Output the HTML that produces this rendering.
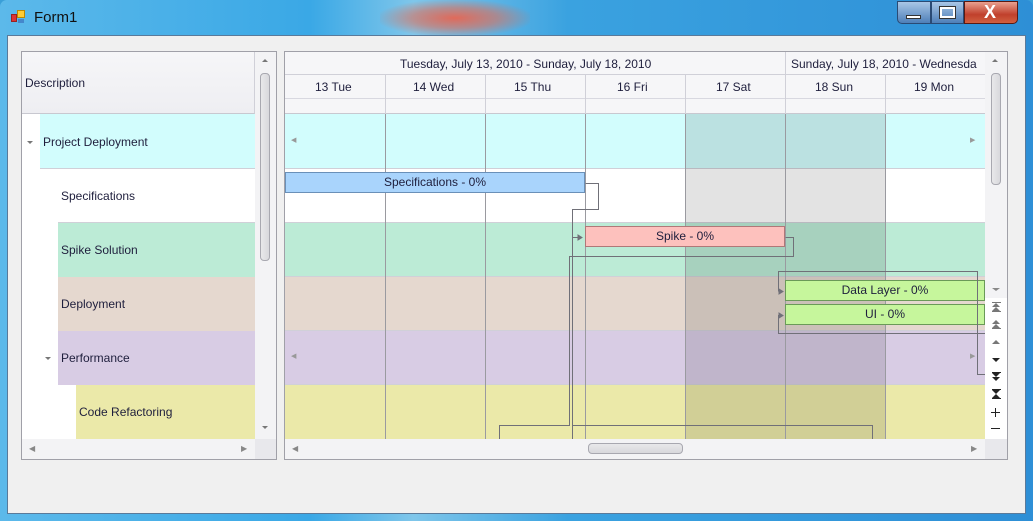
<!DOCTYPE html>
<html><head><style>
*{margin:0;padding:0;box-sizing:border-box}
body{width:1033px;height:521px;overflow:hidden;position:relative;background:#3a9fd8;font-family:"Liberation Sans",sans-serif;font-size:12px;color:#1e1e3c}
.a{position:absolute}
.t{white-space:nowrap}
.u{position:absolute;width:0;height:0;border-left:4px solid transparent;border-right:4px solid transparent;border-bottom:4px solid #777}
.d{position:absolute;width:0;height:0;border-left:4px solid transparent;border-right:4px solid transparent;border-top:4px solid #222}
.b{position:absolute;width:9px;height:1px;background:#777}
</style></head><body>
<div class="a" style="left:0;top:0;width:1033px;height:521px;background:linear-gradient(90deg,#5cb9ea 0%,#3aa8e6 30%,#7fc6ea 40%,#3aa2e0 55%,#2e8fd6 100%);border-radius:7px 7px 0 0"></div>
<div class="a" style="left:380px;top:0;width:150px;height:36px;background:radial-gradient(ellipse at center,#e06a5a 0%,rgba(220,110,90,0.6) 40%,rgba(0,0,0,0) 75%)"></div>
<div class="a" style="left:11px;top:14px;width:6px;height:8px;background:#d33;border:1px solid #922"></div>
<div class="a" style="left:17px;top:10px;width:8px;height:8px;background:#fc3;border:1px solid #b80"></div>
<div class="a" style="left:18px;top:19px;width:6px;height:4px;background:#48c"></div>
<div class="a t" style="left:34px;top:9px;font-size:15px;color:#111">Form1</div>
<div class="a" style="left:897px;top:1px;width:34px;height:23px;border:1px solid #2a4a74;border-radius:0 0 0 5px;background:linear-gradient(#a9c6e6,#4e7fb8)"></div>
<div class="a" style="left:906px;top:15px;width:15px;height:4px;background:#fff;border:1px solid #333"></div>
<div class="a" style="left:931px;top:1px;width:33px;height:23px;border:1px solid #2a4a74;background:linear-gradient(#a9c6e6,#4e7fb8)"></div>
<div class="a" style="left:940px;top:7px;width:15px;height:11px;border:2px solid #fff;outline:1px solid #333"></div>
<div class="a" style="left:964px;top:1px;width:54px;height:23px;border:1px solid #5a1a12;border-radius:0 0 5px 0;background:linear-gradient(#e8a090,#c0402c 60%,#d06040)"></div>
<div class="a t" style="left:984px;top:2px;font-size:18px;font-weight:bold;color:#fff">X</div>
<div class="a" style="left:7px;top:35px;width:1019px;height:479px;background:#f0f0f0;border:1px solid #5a7a9a"></div>

<!-- LEFT PANEL -->
<div class="a" style="left:21px;top:51px;width:256px;height:409px;border:1px solid #a0a0a8;background:#fff;overflow:hidden">
 <div class="a" style="left:0;top:0;width:233px;height:62px;background:linear-gradient(#f6f6f8,#eeeef2);border-bottom:1px solid #c8c8d0;border-right:1px solid #d0d0d8"></div>
 <div class="a t" style="left:3px;top:24px">Description</div>
 <div class="a" style="left:18px;top:62px;width:215px;height:55px;background:#d2fdfd;border-bottom:1px solid #d0d0d8"></div>
 <div class="a t" style="left:21px;top:83px">Project Deployment</div>
 <div class="d" style="left:5px;top:89px;border-top-color:#777;border-left-width:3px;border-right-width:3px;border-top-width:3px"></div>
 <div class="a" style="left:36px;top:117px;width:197px;height:54px;background:#fff;border-bottom:1px solid #d0d0d8"></div>
 <div class="a t" style="left:39px;top:137px">Specifications</div>
 <div class="a" style="left:36px;top:171px;width:197px;height:54px;background:#bcebd6"></div>
 <div class="a t" style="left:39px;top:191px">Spike Solution</div>
 <div class="a" style="left:36px;top:225px;width:197px;height:54px;background:#e5d8cf"></div>
 <div class="a t" style="left:39px;top:245px">Deployment</div>
 <div class="a" style="left:36px;top:279px;width:197px;height:54px;background:#d8cce4"></div>
 <div class="a t" style="left:39px;top:299px">Performance</div>
 <div class="d" style="left:23px;top:305px;border-top-color:#777;border-left-width:3px;border-right-width:3px;border-top-width:3px"></div>
 <div class="a" style="left:54px;top:333px;width:179px;height:54px;background:#ebe9a9"></div>
 <div class="a t" style="left:57px;top:353px">Code Refactoring</div>
 <div class="a" style="left:233px;top:0;width:22px;height:387px;background:#f3f3f5"></div>
 <div class="u" style="left:240px;top:7px;border-bottom-width:3px;border-left-width:3px;border-right-width:3px"></div>
 <div class="a" style="left:238px;top:21px;width:10px;height:188px;border:1px solid #a8a8b0;border-radius:4px;background:linear-gradient(90deg,#e8e8ea,#d8d8dc)"></div>
 <div class="d" style="left:240px;top:374px;border-top-color:#777;border-left-width:3px;border-right-width:3px;border-top-width:3px"></div>
 <div class="a" style="left:0;top:387px;width:255px;height:21px;background:#f3f3f5"></div>
 <div class="a" style="left:233px;top:387px;width:22px;height:21px;background:#e8e8ec"></div>
 <div class="a t" style="left:7px;top:392px;font-size:8px;color:#888">◀</div>
 <div class="a t" style="left:219px;top:392px;font-size:8px;color:#888">▶</div>
</div>

<!-- RIGHT PANEL -->
<div class="a" style="left:284px;top:51px;width:724px;height:409px;border:1px solid #a0a0a8;background:#fff;overflow:hidden">
 <div class="a" style="left:0;top:0;width:700px;height:62px;background:#f6f6f8;border-bottom:1px solid #c8c8d0"></div>
 <div class="a" style="left:0;top:22px;width:700px;height:1px;background:#d0d0d8"></div>
 <div class="a" style="left:0;top:46px;width:700px;height:1px;background:#d8d8e0"></div>
 <div class="a" style="left:500px;top:0;width:1px;height:22px;background:#d0d0d8"></div>
 <div class="a t" style="left:115px;top:5px">Tuesday, July 13, 2010 - Sunday, July 18, 2010</div>
 <div class="a t" style="left:506px;top:5px">Sunday, July 18, 2010 - Wednesda</div>
 <div class="a t" style="left:30px;top:28px">13 Tue</div>
 <div class="a t" style="left:128px;top:28px">14 Wed</div>
 <div class="a t" style="left:229px;top:28px">15 Thu</div>
 <div class="a t" style="left:332px;top:28px">16 Fri</div>
 <div class="a t" style="left:431px;top:28px">17 Sat</div>
 <div class="a t" style="left:530px;top:28px">18 Sun</div>
 <div class="a t" style="left:629px;top:28px">19 Mon</div>
 <div class="a" style="left:0;top:62px;width:700px;height:55px;background:#d2fdfd;border-bottom:1px solid #d0d0d8"></div>
 <div class="a" style="left:0;top:117px;width:700px;height:54px;background:#fff;border-bottom:1px solid #d0d0d8"></div>
 <div class="a" style="left:0;top:171px;width:700px;height:54px;background:#bcebd6;border-bottom:1px solid #d0d0d8"></div>
 <div class="a" style="left:0;top:225px;width:700px;height:54px;background:#e5d8cf;border-bottom:1px solid #d0d0d8"></div>
 <div class="a" style="left:0;top:279px;width:700px;height:54px;background:#d8cce4;border-bottom:1px solid #d0d0d8"></div>
 <div class="a" style="left:0;top:333px;width:700px;height:54px;background:#ebe9a9"></div>
 <div class="a" style="left:400px;top:62px;width:200px;height:325px;background:rgba(0,0,0,0.11)"></div>
 <div class="a" style="left:100px;top:22px;width:1px;height:40px;background:#d0d0d8"></div>
 <div class="a" style="left:200px;top:22px;width:1px;height:40px;background:#d0d0d8"></div>
 <div class="a" style="left:300px;top:22px;width:1px;height:40px;background:#d0d0d8"></div>
 <div class="a" style="left:400px;top:22px;width:1px;height:40px;background:#d0d0d8"></div>
 <div class="a" style="left:500px;top:22px;width:1px;height:40px;background:#d0d0d8"></div>
 <div class="a" style="left:600px;top:22px;width:1px;height:40px;background:#d0d0d8"></div>
 <div class="a" style="left:100px;top:62px;width:1px;height:325px;background:#9a9aa0"></div>
 <div class="a" style="left:200px;top:62px;width:1px;height:325px;background:#9a9aa0"></div>
 <div class="a" style="left:300px;top:62px;width:1px;height:325px;background:#9a9aa0"></div>
 <div class="a" style="left:400px;top:62px;width:1px;height:325px;background:#9a9aa0"></div>
 <div class="a" style="left:500px;top:62px;width:1px;height:325px;background:#9a9aa0"></div>
 <div class="a" style="left:600px;top:62px;width:1px;height:325px;background:#9a9aa0"></div>
 <div class="a t" style="left:6px;top:84px;font-size:7px;color:#999">◀</div>
 <div class="a t" style="left:685px;top:84px;font-size:7px;color:#999">▶</div>
 <div class="a t" style="left:6px;top:300px;font-size:7px;color:#999">◀</div>
 <div class="a t" style="left:685px;top:300px;font-size:7px;color:#999">▶</div>
 <div class="a t" style="left:0;top:120px;width:300px;height:21px;background:#a9d4fc;border:1px solid #6a90b8;text-align:center;line-height:19px">Specifications - 0%</div>
 <div class="a t" style="left:300px;top:174px;width:200px;height:21px;background:#fdc1bd;border:1px solid #b07878;text-align:center;line-height:19px">Spike - 0%</div>
 <div class="a t" style="left:500px;top:228px;width:200px;height:21px;background:#c6f69c;border:1px solid #6a9a58;text-align:center;line-height:19px">Data Layer - 0%</div>
 <div class="a t" style="left:500px;top:252px;width:200px;height:21px;background:#c6f69c;border:1px solid #6a9a58;text-align:center;line-height:19px">UI - 0%</div>
 <svg class="a" style="left:0;top:0" width="724" height="409" fill="none" stroke="#707078" stroke-width="1">
  <path d="M300.5 131.5H313.5V157.5H287.5V423"/>
  <path d="M287.5 185.5H297"/>
  <path d="M500.5 185.5H508.5V204.5H284.5V373.5H214.5V387"/>
  <path d="M287.5 373.5H587.5V387"/>
  <path d="M493.5 239.5V219.5H692.5V322.5H700"/>
  <path d="M493.5 239.5H498"/>
  <path d="M498 263.5H493.5V281.5H700"/>
  <path d="M297 185.5l-4-2.5v5z M498 239.5l-4-2.5v5z M498 263.5l-4-2.5v5z" fill="#707078"/>
 </svg>
 <!-- vscroll -->
 <div class="a" style="left:700px;top:0;width:22px;height:387px;background:#fff"></div>
 <div class="a" style="left:700px;top:0;width:22px;height:246px;background:#f3f3f5"></div>
 <div class="u" style="left:707px;top:7px;border-bottom-width:3px;border-left-width:3px;border-right-width:3px"></div>
 <div class="a" style="left:706px;top:21px;width:10px;height:112px;border:1px solid #a8a8b0;border-radius:4px;background:linear-gradient(90deg,#e8e8ea,#d8d8dc)"></div>
 <div class="d" style="left:707px;top:236px;border-top-color:#888;border-top-width:3px"></div>
 <!-- top bar + double up -->
 <div class="b" style="left:707px;top:250px"></div>
 <div class="u" style="left:707px;top:251px"></div>
 <div class="u" style="left:707px;top:255px"></div>
 <div class="b" style="left:707px;top:259px"></div>
 <!-- double up -->
 <div class="u" style="left:707px;top:268px"></div>
 <div class="u" style="left:707px;top:272px"></div>
 <div class="b" style="left:707px;top:276px"></div>
 <!-- up -->
 <div class="u" style="left:707px;top:288px"></div>
 <!-- down -->
 <div class="d" style="left:707px;top:306px"></div>
 <!-- double down -->
 <div class="b" style="left:707px;top:320px;background:#222"></div>
 <div class="d" style="left:707px;top:321px"></div>
 <div class="d" style="left:707px;top:325px"></div>
 <!-- bottom bar -->
 <div class="b" style="left:707px;top:337px;background:#222"></div>
 <div class="d" style="left:707px;top:338px"></div>
 <div class="d" style="left:707px;top:342px;border-top:none;border-bottom:4px solid #222"></div>
 <div class="b" style="left:707px;top:346px;background:#222"></div>
 <div class="a" style="left:706px;top:360px;width:9px;height:1px;background:#222"></div>
 <div class="a" style="left:710px;top:356px;width:1px;height:9px;background:#222"></div>
 <div class="a" style="left:706px;top:376px;width:9px;height:1px;background:#222"></div>
 <!-- hscroll -->
 <div class="a" style="left:0;top:387px;width:724px;height:21px;background:#f3f3f5"></div>
 <div class="a" style="left:700px;top:387px;width:22px;height:21px;background:#e8e8ec"></div>
 <div class="a t" style="left:7px;top:392px;font-size:8px;color:#888">◀</div>
 <div class="a t" style="left:686px;top:392px;font-size:8px;color:#888">▶</div>
 <div class="a" style="left:303px;top:391px;width:95px;height:11px;border:1px solid #a8a8b0;border-radius:4px;background:linear-gradient(#e8e8ea,#d8d8dc)"></div>
</div>
</body></html>
